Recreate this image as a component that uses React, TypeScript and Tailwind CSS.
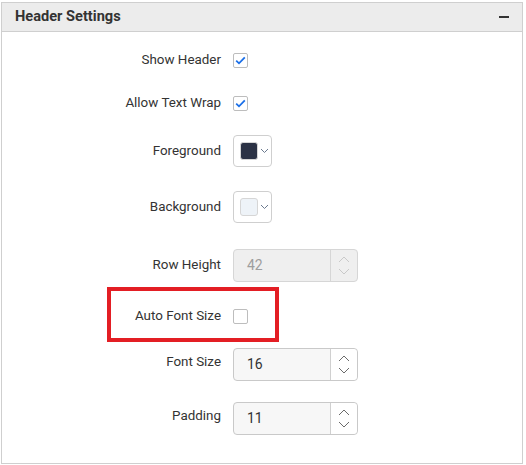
import React from "react";

const font = { fontFamily: "Roboto, 'Liberation Sans', sans-serif" };

function Check({ checked }: { checked: boolean }) {
  return (
    <div className="w-[15px] h-[15px] rounded-[2px] border border-[#bdbdbd] bg-white flex items-center justify-center">
      {checked && (
        <svg width="11" height="9" viewBox="0 0 11 9">
          <path d="M1.2 4.6 L4 7.3 L9.8 1.3" fill="none" stroke="#1a6fe8" strokeWidth="1.8" />
        </svg>
      )}
    </div>
  );
}

function ColorPick({ color }: { color: string }) {
  return (
    <div className="w-[39px] h-[32px] rounded-[4px] border border-[#cfcfcf] bg-white flex items-center pl-[6px]">
      <div className="w-[18px] h-[18px] rounded-[3px] border border-[#d6d6d6]" style={{ background: color }} />
      <svg className="ml-[2px]" width="9" height="6" viewBox="0 0 9 6">
        <path d="M1 1 L4.5 4.5 L8 1" fill="none" stroke="#6b7a8f" strokeWidth="1" />
      </svg>
    </div>
  );
}

function Num({ value, disabled }: { value: string; disabled?: boolean }) {
  const chev = disabled ? "#c9c9c9" : "#6b6b6b";
  return (
    <div
      className={`w-[125px] h-[33px] rounded-[4px] border flex ${
        disabled ? "border-[#d6d6d6] bg-[#efefef]" : "border-[#c9c9c9] bg-[#f7f7f7]"
      }`}
    >
      <div className={`flex-1 flex items-center pl-[13px] text-[14px] ${disabled ? "text-[#9e9e9e]" : "text-[#333]"}`}>
        {value}
      </div>
      <div className={`w-[27px] border-l flex flex-col items-center justify-center gap-[5px] ${disabled ? "border-[#d6d6d6]" : "border-[#d0d0d0] bg-white rounded-r-[4px]"}`}>
        <svg width="12" height="7" viewBox="0 0 12 7">
          <path d="M1 6 L6 1 L11 6" fill="none" stroke={chev} strokeWidth="1" />
        </svg>
        <svg width="12" height="7" viewBox="0 0 12 7">
          <path d="M1 1 L6 6 L11 1" fill="none" stroke={chev} strokeWidth="1" />
        </svg>
      </div>
    </div>
  );
}

function Row({ label, children, mt, lift }: { label: string; children: React.ReactNode; mt: string; lift?: boolean }) {
  return (
    <div className={`flex items-center h-[32px] ${mt}`}>
      <div className={`w-[219px] text-right text-[13.4px] text-[#333] ${lift ? "-mt-[4px]" : ""}`}>{label}</div>
      <div className="ml-[12px]">{children}</div>
    </div>
  );
}

export default function App() {
  return (
    <div className="w-[526px] h-[465px] bg-white relative" style={font}>
      <div className="absolute left-[1px] top-[2px] w-[522px] h-[462px] border border-[#cfcfcf] bg-white">
        <div className="h-[29px] bg-[#ececec] border-b border-[#cfcfcf] flex items-center justify-between pl-[13px] pr-[13px]">
          <span className="text-[14.6px] font-bold text-[#333]">Header Settings</span>
          <div className="w-[10px] h-[2px] bg-[#333]" />
        </div>
        <div className="flex flex-col">
          <Row label="Show Header" mt="mt-[12px]"><Check checked /></Row>
          <Row label="Allow Text Wrap" mt="mt-[11px]"><Check checked /></Row>
          <Row label="Foreground" mt="mt-[16px]"><ColorPick color="#2b3245" /></Row>
          <Row label="Background" mt="mt-[24px]"><ColorPick color="#eef3f8" /></Row>
          <Row label="Row Height" mt="mt-[26px]"><Num value="42" disabled /></Row>
          <Row label="Auto Font Size" mt="mt-[19px]"><Check checked={false} /></Row>
          <Row label="Font Size" mt="mt-[16px]" lift><Num value="16" /></Row>
          <Row label="Padding" mt="mt-[22px]" lift><Num value="11" /></Row>
        </div>
      </div>
      <div className="absolute left-[107px] top-[287px] w-[172px] h-[55px] border-[4px] border-[#e31e24]" />
    </div>
  );
}
